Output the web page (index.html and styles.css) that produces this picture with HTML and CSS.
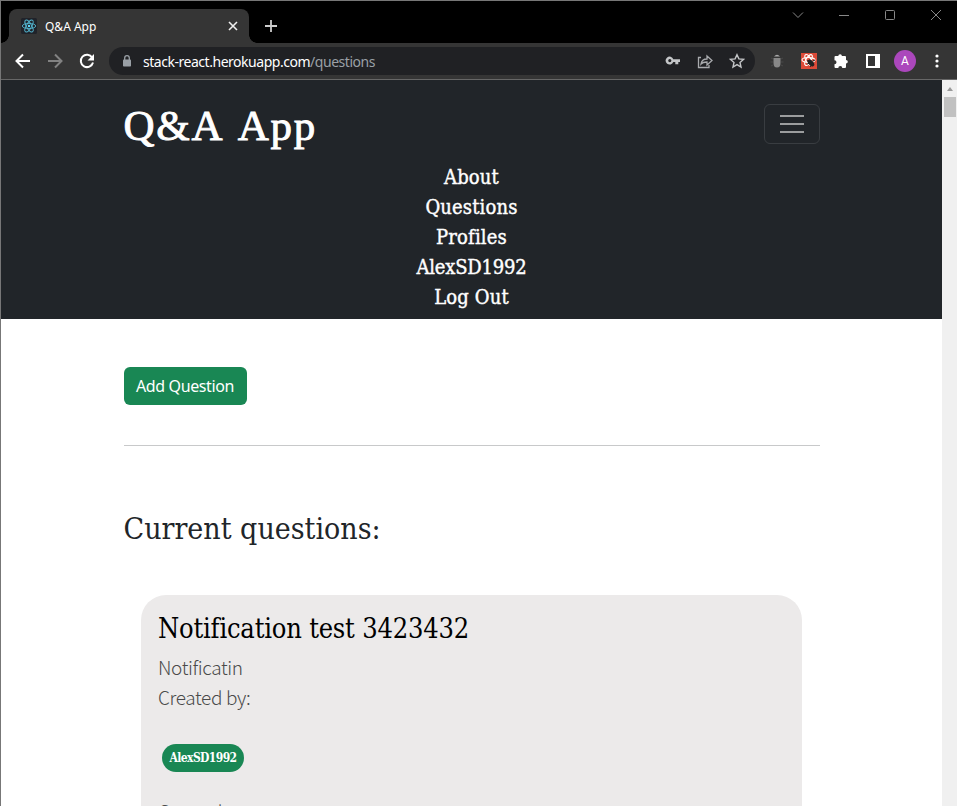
FILE: index.html
```html
<!DOCTYPE html>
<html lang="en">
<head>
<meta charset="utf-8">
<title>Q&amp;A App</title>
<link rel="stylesheet" href="styles.css">
</head>
<body>
<div class="window">
  <div class="tabstrip">
    <div class="tab">
      <svg class="favicon" width="16" height="16" viewBox="0 0 16 16"><rect width="16" height="16" rx="1.5" fill="#20232a"/><g fill="none" stroke="#53b5cf" stroke-width=".9"><ellipse cx="8" cy="8" rx="6.7" ry="2.6"/><ellipse cx="8" cy="8" rx="6.7" ry="2.6" transform="rotate(60 8 8)"/><ellipse cx="8" cy="8" rx="6.7" ry="2.6" transform="rotate(120 8 8)"/></g><circle cx="8" cy="8" r="1.2" fill="#61dafb"/></svg>
      <span class="tab-title">Q&amp;A App</span>
      <svg width="10" height="10" viewBox="0 0 10 10" stroke="#eee" stroke-width="1.6"><path d="M1 1l8 8M9 1L1 9"/></svg>
    </div>
    <svg class="newtab" width="12" height="12" viewBox="0 0 12 12" stroke="#ccc" stroke-width="1.8"><path d="M6 0v12M0 6h12"/></svg>
    <div class="controls">
      <svg width="12" height="12" viewBox="0 0 12 12"><path d="M1 3.5l5 5 5-5"/></svg>
      <svg width="12" height="12" viewBox="0 0 12 12"><path d="M1 6.5h10"/></svg>
      <svg width="12" height="12" viewBox="0 0 12 12"><rect x="1.5" y="1.5" width="9" height="9" rx="1"/></svg>
      <svg width="12" height="12" viewBox="0 0 12 12"><path d="M1 1l10 10M11 1L1 11"/></svg>
    </div>
  </div>
  <div class="toolbar">
    <svg class="nav" width="16" height="16" viewBox="0 0 16 16" stroke="#fff"><path d="M15 8H2M8 1.5L1.5 8 8 14.5"/></svg>
    <svg class="nav" width="16" height="16" viewBox="0 0 16 16" stroke="#828282"><path d="M1 8h13M8 1.5L14.500 8 8 14.500"/></svg>
    <svg class="nav" width="16" height="16" viewBox="0 0 16 16"><path d="M13.200 4.500A6.200 6.200 0 1 0 14 9.500" stroke="#fff"/><path d="M15 1v6.500H8.500z" fill="#fff"/></svg>
    <div class="address">
      <svg class="lock" width="10" height="12" viewBox="0 0 10 12"><rect x="1" y="4.500" width="8" height="7" rx=".8" fill="#9aa0a6"/><path d="M2.700 5V3a2.300 2.300 0 0 1 4.600 0v2" fill="none" stroke="#9aa0a6" stroke-width="1.300"/></svg>
      <span class="url"><span class="host">stack-react.herokuapp.com</span><span class="path">/questions</span></span>
      <svg width="16" height="16" viewBox="0 0 16 16"><path fill="#c4c6c8" fill-rule="evenodd" d="M8.300 6.200A4 4 0 1 0 8.300 9h2v2.300h3V9H15V6.200zM4.800 6a1.600 1.600 0 1 1 0 3.200 1.600 1.600 0 0 1 0-3.200z"/></svg>
      <svg width="16" height="16" viewBox="0 0 16 16" fill="none" stroke="#a9abae" stroke-width="1.300"><path d="M4 4.500H1.500v10H12V12"/><path d="M4 11c.5-3.500 2.500-5 6-5V3l5 4.500L10 12V9c-2.500 0-4.500.3-6 2z"/></svg>
      <svg width="16" height="16" viewBox="0 0 16 16" fill="none" stroke="#c4c6c8" stroke-width="1.400"><path d="M8 1.700l1.900 4.200 4.600.5L11 9.500l1 4.500-4-2.400L4 14l1-4.500L1.500 6.400l4.600-.5z"/></svg>
    </div>
    <div class="extensions">
      <svg width="16" height="16" viewBox="0 0 16 16"><path d="M5 3.500Q8 0 11 3.500z" fill="#aaa"/><path d="M2 5l2 1M1.500 9H4M2 13l2-1M14 5l-2 1M14.500 9H12M14 13l-2-1" stroke="#484848"/><path d="M4.500 5h7v5q0 4.500-3.500 4.500T4.500 10z" fill="#888"/></svg>
      <svg width="16" height="16" viewBox="0 0 16 16"><rect width="16" height="16" fill="#dc4a38"/><g fill="none" stroke="#fff" stroke-width="1.100"><ellipse cx="7.500" cy="7" rx="6.500" ry="2.500"/><ellipse cx="7.500" cy="7" rx="6" ry="2.500" transform="rotate(60 7.500 7)"/><ellipse cx="7.500" cy="7" rx="6" ry="2.500" transform="rotate(120 7.500 7)"/></g><ellipse cx="10" cy="10" rx="2.500" ry="4" transform="rotate(-40 10 10)" fill="#222"/><path d="M6 8l3-1M6 11l3-1M9 14l2-3M12 8l2-1" stroke="#222"/></svg>
      <svg width="16" height="16" viewBox="0 0 16 16"><path fill="#fff" d="M2.500 3H5.300a1.800 1.800 0 0 1 3.600 0H12q1 0 1 1v3a1.800 1.800 0 0 1 0 3.600V14q0 1-1 1H9.300a2 2 0 0 0-4 0H2.500q-1 0-1-1v-2.700a2 2 0 0 0 0-4V4q0-1 1-1z"/></svg>
      <svg width="16" height="16" viewBox="0 0 16 16"><path fill="#fff" fill-rule="evenodd" d="M1 1h14v14H1zM3 3v10h7V3z"/></svg>
      <span class="avatar">A</span>
      <svg width="16" height="16" viewBox="0 0 16 16" fill="#fff"><circle cx="8" cy="3" r="1.600"/><circle cx="8" cy="8" r="1.600"/><circle cx="8" cy="13" r="1.600"/></svg>
    </div>
  </div>
  <div class="viewport">
    <div class="page">
      <header class="header">
        <div class="container">
          <div class="brand-row">
            <span class="brand">Q&amp;A App</span>
            <button class="toggler" aria-label="Menu"><i></i><i></i><i></i></button>
          </div>
          <nav class="menu"><a>About</a><a>Questions</a><a>Profiles</a><a class="user">AlexSD1992</a><a>Log Out</a></nav>
        </div>
      </header>
      <main class="container">
        <button class="add">Add Question</button>
        <hr>
        <h1>Current questions:</h1>
        <article class="card">
          <h2>Notification test 3423432</h2>
          <p>Notificatin</p>
          <p>Created by:</p>
          <a class="badge">AlexSD1992</a>
          <p>Created:</p>
        </article>
      </main>
    </div>
    <div class="scrollbar"><span class="arrow"></span><span class="thumb"></span></div>
  </div>
</div>
</body>
</html>
```
FILE: styles.css
```css
* { box-sizing: border-box; }
body { margin: 0; overflow: hidden; }
svg { display: block; flex: none; }
button { border: 0; padding: 0; }
.window { width: 957px; height: 806px; overflow: hidden; display: flex; flex-direction: column; border-top: 1px solid #777; border-left: 1px solid #777; background: #000; font-family: "Noto Sans", sans-serif; }
.tabstrip { height: 42px; flex: none; display: flex; align-items: flex-start; padding: 8px 15px 0 8px; }
.tab { position: relative; width: 240px; height: 34px; background: #353535; border-radius: 8px 8px 0 0; display: flex; align-items: center; padding: 0 11px 0 12px; color: #fff; font-size: 12px; }
.tab::before, .tab::after { content: ""; position: absolute; bottom: 0; width: 8px; height: 8px; }
.tab::before { left: -8px; background: radial-gradient(circle at 0 0, transparent 7.500px, #353535 8px); }
.tab::after { right: -8px; background: radial-gradient(circle at 100% 0, transparent 7.500px, #353535 8px); }
.tab-title { flex: 1; margin-left: 8px; letter-spacing: 0; }
.newtab { margin: 11px 0 0 16px; }
.controls { display: flex; gap: 34px; margin-left: auto; fill: none; stroke: #888; }
.toolbar { height: 37px; flex: none; background: #353535; border-bottom: 1px solid #676767; display: flex; align-items: center; padding: 0 12px 0 14px; }
.nav { margin-right: 16px; fill: none; stroke-width: 2; }
.address { width: 646px; height: 28px; margin-left: -2px; border-radius: 14px; background: #202124; display: flex; align-items: center; gap: 16px; padding: 0 10px 0 13px; }
.url { flex: 1; margin-left: -5px; font-size: 14px; white-space: nowrap; color: #9aa0a6; letter-spacing: -.47px; }
.host { color: #fff; }
.extensions { display: flex; align-items: center; gap: 16px; margin-left: auto; }
.avatar { width: 22px; height: 22px; margin: 0 -3px; border-radius: 50%; background: #ab47bc; color: #fff; font: 12px/22px Roboto, sans-serif; text-align: center; }
.viewport { flex: 1; display: flex; min-height: 0; }
.page { width: 941px; overflow: hidden; background: #fff; }
.scrollbar { width: 15px; background: #f0f0f0; display: flex; flex-direction: column; align-items: center; }
.arrow { margin-top: 7px; border: 3.500px solid transparent; border-top: 0; border-bottom: 4px solid #999; }
.thumb { width: 12px; height: 20px; margin-top: 6px; background: #c1c1c1; }
.header { height: 239px; background: #212529; padding-top: 16px; }
.container { width: 696px; margin: 0 auto; }
.brand-row { display: flex; justify-content: space-between; height: 66px; }
.brand { font: 43px/60px "Liberation Serif", serif; letter-spacing: 1.700px; word-spacing: 6px; color: #fff; -webkit-text-stroke: .9px #fff; }
.toggler { width: 56px; height: 40px; margin-top: 8px; border: 1px solid #393d41; border-radius: 6px; background: transparent; display: flex; flex-direction: column; align-items: center; justify-content: center; gap: 6px; }
.toggler i { width: 24px; height: 2px; background: #9b9d9e; }
.menu { display: flex; flex-direction: column; align-items: center; font: 500 20px/30px "Roboto Slab", "DejaVu Serif Condensed", "DejaVu Serif", serif; font-stretch: condensed; color: #fff; -webkit-text-stroke: .4px #fff; letter-spacing: .15px; }
.menu .user { letter-spacing: -.2px; }
.add { display: block; width: 123px; height: 38px; margin-top: 48px; border-radius: 6px; background: #198754; color: #fff; font: 16px/38px "Noto Sans", sans-serif; letter-spacing: -.38px; white-space: nowrap; }
hr { height: 1px; margin: 40px 0 64px; border: 0; background: #c8c9ca; }
h1 { margin: 0; font: 30px/38px "Roboto Slab", "DejaVu Serif Condensed", "DejaVu Serif", serif; font-stretch: condensed; color: #212529; white-space: nowrap; }
.card { width: 661px; height: 400px; margin: 47px auto 0; padding: 17px 18px; border-radius: 25px; background: #eceaea; }
h2 { margin: 0 0 7px -1px; font: 27px/33px "Roboto Slab", "DejaVu Serif Condensed", "DejaVu Serif", serif; font-stretch: condensed; letter-spacing: -.2px; color: #000; white-space: nowrap; }
p { margin: 0 0 0 -1px; font: 300 19px/30px "Source Sans Pro", "Noto Sans CJK SC", sans-serif; letter-spacing: -.38px; color: #4a4a4a; }
.badge { display: flex; align-items: center; justify-content: center; width: 82px; height: 28px; margin: 32px 0 24px 3px; border-radius: 14px; background: #198754; color: #fff; font: 700 12px/28px "Roboto Slab", "DejaVu Serif Condensed", "DejaVu Serif", serif; font-stretch: condensed; letter-spacing: -.6px; }
```
